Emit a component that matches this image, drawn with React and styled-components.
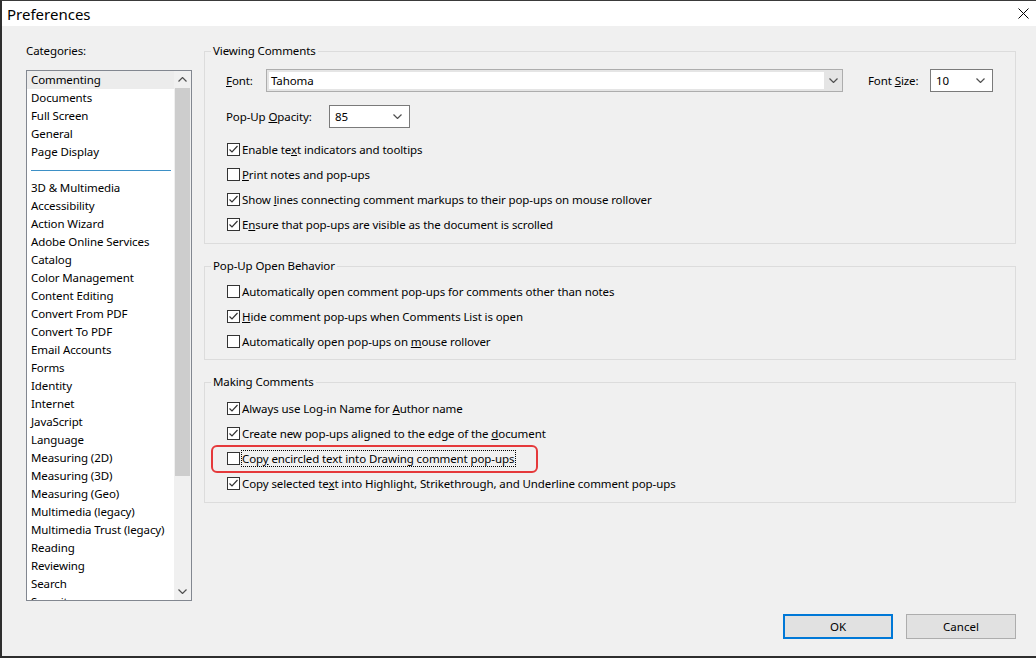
import React from 'react';
import styled, { createGlobalStyle } from 'styled-components';

const Global = createGlobalStyle`
  html, body { margin: 0; padding: 0; background: #f0f0f0; }
  body {
    font-family: "Noto Sans", "Open Sans", sans-serif;
    font-size: 11.5px;
    letter-spacing: -0.1px;
    color: #000;
  }
  #root { width: 1036px; height: 658px; }
  * { box-sizing: border-box; }
`;

const Window = styled.div`
  width: 1036px;
  height: 658px;
  display: flex;
  flex-direction: column;
  background: #f0f0f0;
  border-left: 2px solid #2e2e2e;
  border-top: 1px solid #3a3a3a;
  border-bottom: 2px solid #2e2e2e;
  overflow: hidden;
`;

const TitleBar = styled.div`
  height: 25px;
  flex-shrink: 0;
  background: #fff;
  display: flex;
  align-items: center;
  justify-content: space-between;
  padding: 0 7px 0 5px;
`;

const Title = styled.span`
  font-size: 15px;
  letter-spacing: 0;
  line-height: 20px;
`;

const Close = styled.svg`
  display: block;
`;

const Main = styled.div`
  display: flex;
  gap: 12px;
  height: 575px;
  padding: 17px 20px 0 24px;
  flex-shrink: 0;
`;

const LeftCol = styled.div`
  width: 166px;
  display: flex;
  flex-direction: column;
`;

const Caption = styled.div`
  line-height: 16px;
  height: 16px;
  margin-bottom: 11px;
`;

const ListBox = styled.div`
  flex: 1;
  display: flex;
  background: #fff;
  border: 1px solid #828790;
  overflow: hidden;
`;

const Items = styled.div`
  flex: 1;
  overflow: hidden;
  display: flex;
  flex-direction: column;
`;

const Item = styled.div`
  height: 18px;
  flex-shrink: 0;
  line-height: 18px;
  padding-left: 4px;
  white-space: nowrap;
  background: ${p => (p.$selected ? '#ececec' : 'transparent')};
`;

const Separator = styled.div`
  height: 18px;
  flex-shrink: 0;
  display: flex;
  align-items: center;
  padding: 0 3px 0 4px;
  &::before {
    content: '';
    flex: 1;
    height: 1px;
    background: #3d90c6;
  }
`;

const ScrollBar = styled.div`
  width: 17px;
  display: flex;
  flex-direction: column;
  background: #f0f0f0;
`;

const ScrollArrow = styled.div`
  height: 17px;
  flex-shrink: 0;
  display: flex;
  align-items: center;
  justify-content: center;
`;

const Track = styled.div`
  flex: 1;
  padding: 0 1px;
`;

const Thumb = styled.div`
  height: 388px;
  background: #cdcdcd;
`;

const RightCol = styled.div`
  flex: 1;
  display: flex;
  flex-direction: column;
  gap: 14px;
`;

const Group = styled.fieldset`
  margin: 0;
  padding: 0;
  border: 1px solid #dcdcdc;
  min-width: 0;
`;

const Legend = styled.legend`
  margin-left: 6px;
  padding: 0 2px;
  line-height: 16px;
  height: 16px;
`;

const GroupBody = styled.div`
  display: flex;
  flex-direction: column;
  padding: ${p => p.$pad};
`;

const FieldRow = styled.div`
  display: flex;
  align-items: center;
  height: 23px;
  margin-top: ${p => p.$mt || 0}px;
`;

const FieldLabel = styled.span`
  width: ${p => p.$w}px;
  flex-shrink: 0;
  margin-left: ${p => p.$ml || 0}px;
  white-space: nowrap;
`;

const Combo = styled.div`
  flex: 1;
  height: 23px;
  display: flex;
  border: 1px solid #adadad;
  background: #e5e5e5;
  padding: 2px 0 2px 2px;
`;

const ComboField = styled.div`
  flex: 1;
  background: #fff;
  padding-left: 2px;
  line-height: 17px;
`;

const ComboButton = styled.div`
  width: 18px;
  display: flex;
  align-items: center;
  justify-content: center;
`;

const Select = styled.div`
  width: ${p => p.$w}px;
  height: 23px;
  flex-shrink: 0;
  display: flex;
  align-items: center;
  justify-content: space-between;
  border: 1px solid #7a7a7a;
  background: #fff;
  padding: 0 7px 0 5px;
`;

const CheckList = styled.div`
  display: flex;
  flex-direction: column;
  margin-top: ${p => p.$mt || 0}px;
`;

const CheckRow = styled.label`
  position: relative;
  height: 25px;
  display: flex;
  align-items: center;
  gap: 2px;
  padding-left: 1px;
  white-space: nowrap;
`;

const Box = styled.span`
  width: 13px;
  height: 13px;
  flex-shrink: 0;
  border: 1px solid #333;
  background: #fff;
  display: flex;
  align-items: center;
  justify-content: center;
`;

const CheckText = styled.span`
  line-height: 15px;
  padding: 0 1px 0 0;
  outline: ${p => (p.$focus ? '1px dotted #000' : 'none')};
`;

const Mn = styled.span`
  text-decoration: underline;
  text-underline-offset: 1px;
`;

const Highlight = styled.span`
  position: absolute;
  left: -15px;
  top: -1px;
  width: 327px;
  height: 28px;
  border: 2px solid #e5393b;
  border-radius: 6px;
  pointer-events: none;
`;

const Footer = styled.div`
  display: flex;
  justify-content: flex-end;
  gap: 13px;
  padding: 13px 20px 0 0;
`;

const Button = styled.button`
  width: 110px;
  height: 25px;
  font: inherit;
  color: #000;
  background: #e1e1e1;
  border: ${p => (p.$default ? '2px solid #0078d7' : '1px solid #adadad')};
  border-radius: 0;
  padding: 0;
`;

const Chevron = ({ up }) => (
  <svg width="9" height="5" viewBox="0 0 9 5">
    <polyline
      points={up ? '0.5,4.5 4.5,0.5 8.5,4.5' : '0.5,0.5 4.5,4.5 8.5,0.5'}
      fill="none"
      stroke="#505050"
      strokeWidth="1.2"
    />
  </svg>
);

const Check = ({ checked }) => (
  <Box>
    {checked && (
      <svg width="11" height="11" viewBox="0 0 11 11">
        <polyline points="1.5,5.5 4,8 9.5,2" fill="none" stroke="#333" strokeWidth="1.2" />
      </svg>
    )}
  </Box>
);

const categories = [
  'Commenting', 'Documents', 'Full Screen', 'General', 'Page Display', '---',
  '3D & Multimedia', 'Accessibility', 'Action Wizard', 'Adobe Online Services', 'Catalog',
  'Color Management', 'Content Editing', 'Convert From PDF', 'Convert To PDF', 'Email Accounts',
  'Forms', 'Identity', 'Internet', 'JavaScript', 'Language', 'Measuring (2D)', 'Measuring (3D)',
  'Measuring (Geo)', 'Multimedia (legacy)', 'Multimedia Trust (legacy)', 'Reading', 'Reviewing',
  'Search', 'Security',
];

const Opt = ({ checked, children, focus, highlight }) => (
  <CheckRow>
    <Check checked={checked} />
    <CheckText $focus={focus}>{children}</CheckText>
    {highlight && <Highlight />}
  </CheckRow>
);

export default function App() {
  return (
    <>
      <Global />
      <Window>
        <TitleBar>
          <Title>Preferences</Title>
          <Close width="11" height="11" viewBox="0 0 11 11">
            <line x1="0.5" y1="0.5" x2="10.5" y2="10.5" stroke="#000" strokeWidth="1" />
            <line x1="10.5" y1="0.5" x2="0.5" y2="10.5" stroke="#000" strokeWidth="1" />
          </Close>
        </TitleBar>
        <Main>
          <LeftCol>
            <Caption>Categories:</Caption>
            <ListBox>
              <Items>
                {categories.map((c, i) =>
                  c === '---' ? (
                    <Separator key={i} />
                  ) : (
                    <Item key={i} $selected={i === 0}>{c}</Item>
                  )
                )}
              </Items>
              <ScrollBar>
                <ScrollArrow><Chevron up /></ScrollArrow>
                <Track><Thumb /></Track>
                <ScrollArrow><Chevron /></ScrollArrow>
              </ScrollBar>
            </ListBox>
          </LeftCol>
          <RightCol>
            <Group>
              <Legend>Viewing Comments</Legend>
              <GroupBody $pad="10px 22px 6px 21px">
                <FieldRow>
                  <FieldLabel $w={40}><Mn>F</Mn>ont:</FieldLabel>
                  <Combo>
                    <ComboField>Tahoma</ComboField>
                    <ComboButton><Chevron /></ComboButton>
                  </Combo>
                  <FieldLabel $w={62} $ml={25}>Font <Mn>S</Mn>ize:</FieldLabel>
                  <Select $w={63}>10<Chevron /></Select>
                </FieldRow>
                <FieldRow $mt={13}>
                  <FieldLabel $w={103}>Pop-Up <Mn>O</Mn>pacity:</FieldLabel>
                  <Select $w={81}>85<Chevron /></Select>
                </FieldRow>
                <CheckList $mt={9}>
                  <Opt checked>Enable te<Mn>x</Mn>t indicators and tooltips</Opt>
                  <Opt><Mn>P</Mn>rint notes and pop-ups</Opt>
                  <Opt checked>Show <Mn>l</Mn>ines connecting comment markups to their pop-ups on mouse rollover</Opt>
                  <Opt checked>E<Mn>n</Mn>sure that pop-ups are visible as the document is scrolled</Opt>
                </CheckList>
              </GroupBody>
            </Group>
            <Group>
              <Legend>Pop-Up Open Behavior</Legend>
              <GroupBody $pad="5px 22px 5px 21px">
                <CheckList>
                  <Opt>Automatically open comment pop-ups for comments other than notes</Opt>
                  <Opt checked><Mn>H</Mn>ide comment pop-ups when Comments List is open</Opt>
                  <Opt>Automatically open pop-ups on <Mn>m</Mn>ouse rollover</Opt>
                </CheckList>
              </GroupBody>
            </Group>
            <Group>
              <Legend>Making Comments</Legend>
              <GroupBody $pad="6px 22px 6px 21px">
                <CheckList>
                  <Opt checked>Always use Log-in Name for <Mn>A</Mn>uthor name</Opt>
                  <Opt checked>Create new pop-ups aligned to the edge of the <Mn>d</Mn>ocument</Opt>
                  <Opt focus highlight>Cop<Mn>y</Mn> encircled text into Drawing comment pop-ups</Opt>
                  <Opt checked>Copy selected te<Mn>x</Mn>t into Highlight, Strikethrough, and Underline comment pop-ups</Opt>
                </CheckList>
              </GroupBody>
            </Group>
          </RightCol>
        </Main>
        <Footer>
          <Button $default>OK</Button>
          <Button>Cancel</Button>
        </Footer>
      </Window>
    </>
  );
}
